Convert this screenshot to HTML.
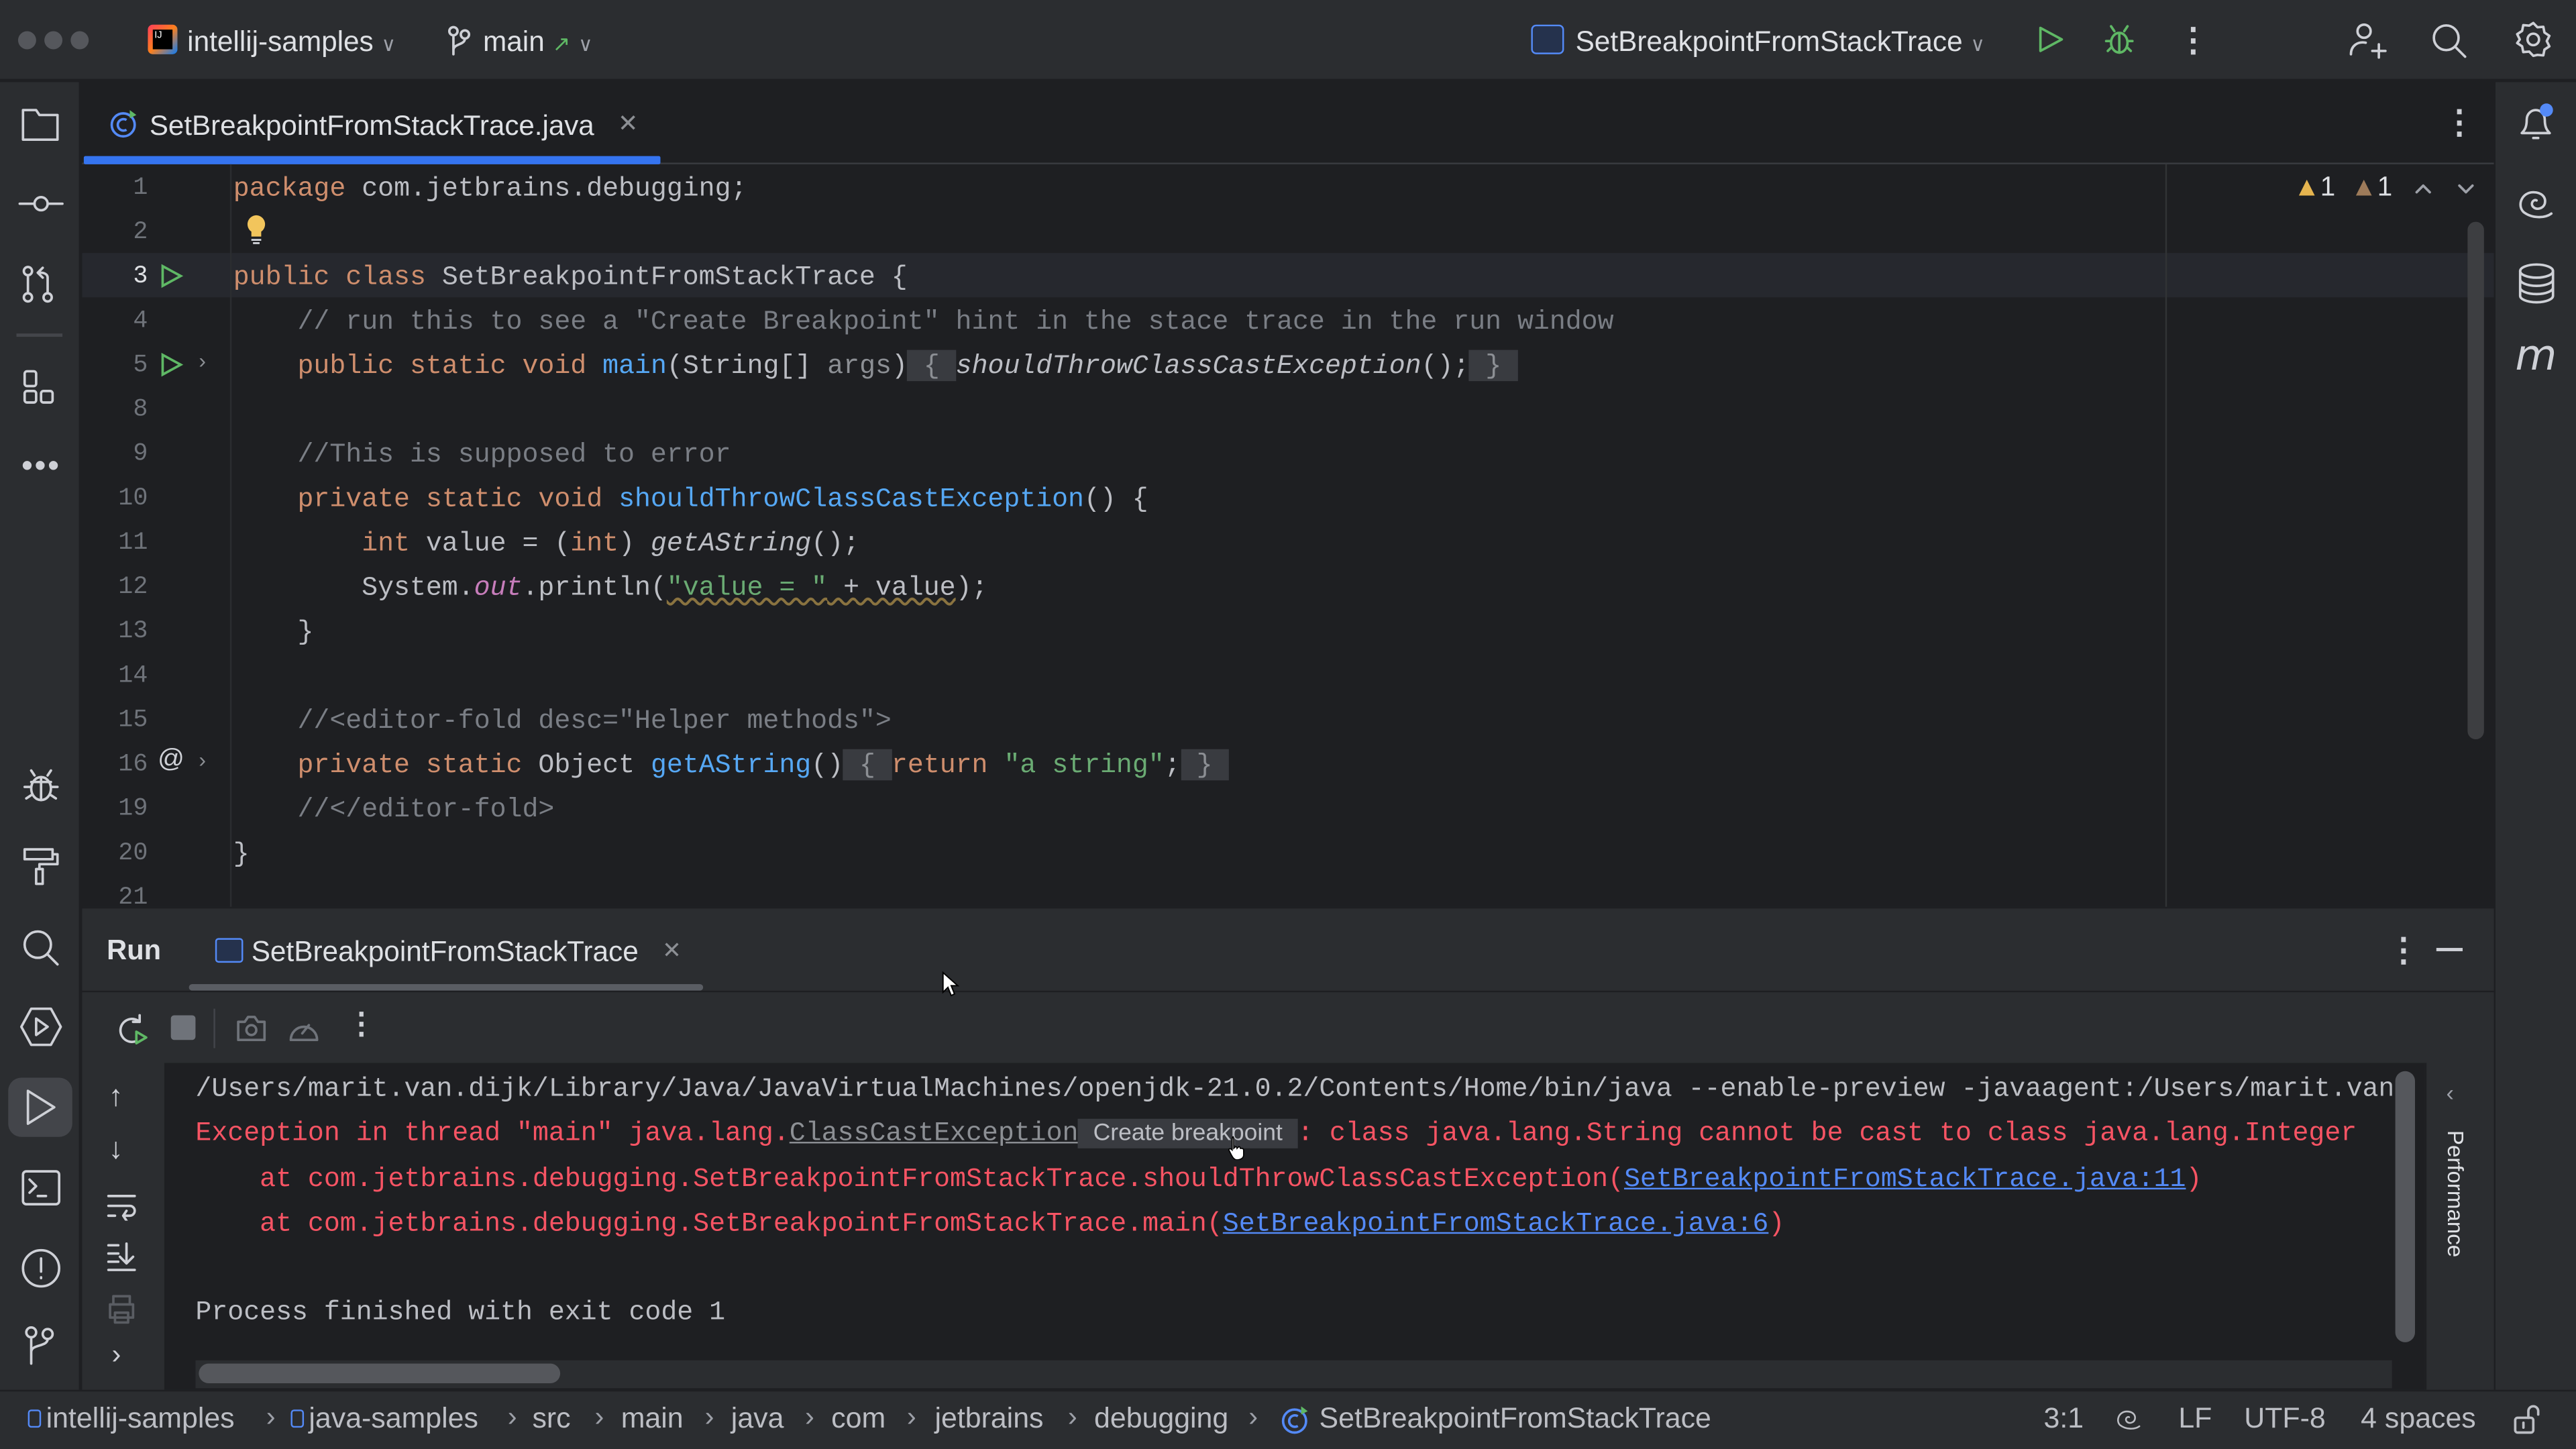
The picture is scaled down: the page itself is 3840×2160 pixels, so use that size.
<!DOCTYPE html>
<html><head><meta charset="utf-8">
<style>
*{margin:0;padding:0;box-sizing:border-box}
html,body{width:3840px;height:2160px;overflow:hidden;background:#1e1f22}
#s{position:absolute;left:0;top:0;width:1568px;height:882px;transform:scale(2.44898);transform-origin:0 0;background:#1e1f22;font-family:"Liberation Sans",sans-serif;color:#dfe1e5;overflow:hidden}
.a{position:absolute}
.mono{font-family:"Liberation Mono",monospace;font-size:16.3px;white-space:pre}
.ln{position:absolute;left:52px;width:38px;text-align:right;color:#6f737a;font-family:"Liberation Mono",monospace;font-size:15px}
.kw{color:#cf8e6d}.fn{color:#56a8f5}.cm{color:#7a7e85}.st{color:#6aab73}.it{font-style:italic}.gr{color:#8c8f94}
.fold{background:#393b40;color:#8c8f94}
.ic{position:absolute;stroke:#ced0d6;fill:none;stroke-width:1.5;stroke-linecap:round;stroke-linejoin:round}
.red{color:#f75464}
.lnk{color:#548af7;text-decoration:underline}
.sb{position:absolute;top:853px;font-size:17.5px;color:#bcbec4;white-space:pre}
.sep{position:absolute;top:853px;font-size:17px;color:#9da0a8}
.mod{display:inline-block;width:8px;height:11px;border:1.5px solid #548af7;border-radius:2px;margin-right:3px}
</style></head><body>
<div id="s">
<!-- title bar -->
<div class="a" style="left:0;top:0;width:1568px;height:49px;background:#2b2d30;border-bottom:1px solid #1e1f22"></div>
<div class="a" style="left:11px;top:19px;width:11px;height:11px;border-radius:50%;background:#55575c"></div>
<div class="a" style="left:27px;top:19px;width:11px;height:11px;border-radius:50%;background:#55575c"></div>
<div class="a" style="left:43px;top:19px;width:11px;height:11px;border-radius:50%;background:#55575c"></div>
<div class="a" style="left:90px;top:15px;width:18px;height:18px;border-radius:3px;background:linear-gradient(135deg,#ff3d5b,#fc801d 50%,#087cfa)"></div>
<div class="a" style="left:93px;top:18px;width:12px;height:12px;background:#000;color:#fff;font-size:6px;line-height:8px;padding-left:1px">IJ</div>
<div class="a" style="left:114px;top:15px;font-size:17.3px;color:#dfe1e5">intellij-samples <span style="color:#9da0a8;font-size:12px">∨</span></div>
<svg class="ic" style="left:272px;top:15px" width="16" height="20" viewBox="0 0 16 20"><circle cx="4" cy="4" r="2.5"/><circle cx="11" cy="6" r="2.5"/><path d="M4 6.5V18M11 8.5c0 4-7 3-7 7"/></svg>
<div class="a" style="left:294px;top:15px;font-size:17.3px">main <span style="color:#5fb865;font-size:13px">↗</span> <span style="color:#9da0a8;font-size:12px">∨</span></div>
<div class="a" style="left:932px;top:15px;width:20px;height:18px;border:1.5px solid #548af7;border-radius:3px;background:#25324d"></div>
<div class="a" style="left:959px;top:15px;font-size:17.3px">SetBreakpointFromStackTrace <span style="color:#9da0a8;font-size:12px">∨</span></div>
<svg class="ic" style="left:1238px;top:14px;stroke:#5fb865" width="20" height="20" viewBox="0 0 20 20"><path d="M4 3l13 7-13 7z"/></svg>
<svg class="ic" style="left:1279px;top:13px;stroke:#5fb865" width="22" height="22" viewBox="0 0 22 22"><ellipse cx="11" cy="13" rx="5" ry="6"/><path d="M8 6l-2-3M14 6l2-3M3 12h3M16 12h3M4 18l2-2M18 18l-2-2M11 8v11"/></svg>
<div class="a" style="left:1325px;top:12px;font-size:20px;color:#ced0d6;font-weight:bold">⋮</div>
<svg class="ic" style="left:1428px;top:12px" width="26" height="26" viewBox="0 0 26 26"><circle cx="11" cy="7" r="4"/><path d="M3 21c0-5 4-8 9-7M16 19h8M20 15v8"/></svg>
<svg class="ic" style="left:1479px;top:13px" width="24" height="24" viewBox="0 0 24 24"><circle cx="10" cy="10" r="7.5"/><path d="M15.5 15.5l6 6"/></svg>
<svg class="ic" style="left:1530px;top:12px" width="24" height="24" viewBox="0 0 24 24"><circle cx="12" cy="12" r="3.5"/><path d="M12 2l2.5 2.6 3.6-.3.7 3.5 3 2-1.6 3.2 1.6 3.2-3 2-.7 3.5-3.6-.3L12 22l-2.5-2.6-3.6.3-.7-3.5-3-2L3.8 12 2.2 8.8l3-2 .7-3.5 3.6.3z"/></svg>

<!-- left sidebar -->
<div class="a" style="left:0;top:50px;width:49px;height:796px;background:#2b2d30;border-right:1px solid #1e1f22"></div>
<svg class="ic" style="left:12px;top:64px" width="26" height="24" viewBox="0 0 26 24"><path d="M2 3h8l2 3h11v15H2z"/></svg>
<svg class="ic" style="left:10px;top:114px" width="30" height="20" viewBox="0 0 30 20"><circle cx="15" cy="10" r="4"/><path d="M2 10h9M19 10h9"/></svg>
<svg class="ic" style="left:12px;top:160px" width="26" height="26" viewBox="0 0 26 26"><circle cx="5" cy="5" r="2.5"/><circle cx="5" cy="21" r="2.5"/><circle cx="17" cy="21" r="2.5"/><path d="M5 8v10M17 18V9c0-2-2-3-4-3h-1M14 3l-3 3 3 3"/></svg>
<div class="a" style="left:10px;top:203px;width:28px;height:1.5px;background:#43454a"></div>
<svg class="ic" style="left:13px;top:224px" width="24" height="24" viewBox="0 0 24 24"><rect x="2" y="2" width="7" height="9" rx="1.5"/><rect x="2" y="14" width="7" height="7" rx="1.5"/><rect x="12" y="14" width="7" height="7" rx="1.5"/></svg>
<div class="a" style="left:13px;top:273px;font-size:20px;color:#ced0d6;letter-spacing:1px">•••</div>
<svg class="ic" style="left:12px;top:465px" width="26" height="26" viewBox="0 0 26 26"><ellipse cx="13" cy="15" rx="6" ry="7"/><path d="M9 7l-2-3M17 7l2-3M3 14h4M19 14h4M4 21l3-2M22 21l-3-2M13 9v13M7 11h12"/></svg>
<svg class="ic" style="left:12px;top:514px" width="26" height="26" viewBox="0 0 26 26"><path d="M3 3h17v6H3zM20 6h3v6H12v3M10 15h4v9h-4z"/></svg>
<svg class="ic" style="left:12px;top:564px" width="26" height="26" viewBox="0 0 26 26"><circle cx="11" cy="11" r="8"/><path d="M17 17l6 6"/></svg>
<svg class="ic" style="left:11px;top:612px" width="28" height="26" viewBox="0 0 28 26"><path d="M8 2h12l6 11-6 11H8L2 13z"/><path d="M11 8l7 5-7 5z"/></svg>
<div class="a" style="left:5px;top:656px;width:39px;height:36px;border-radius:8px;background:#43454a"></div>
<svg class="ic" style="left:14px;top:662px" width="22" height="24" viewBox="0 0 22 24"><path d="M3 2l16 10L3 22z"/></svg>
<svg class="ic" style="left:12px;top:711px" width="26" height="24" viewBox="0 0 26 24"><rect x="2" y="2" width="22" height="20" rx="2"/><path d="M6 7l4 4-4 4M11 17h5"/></svg>
<svg class="ic" style="left:11px;top:758px" width="28" height="28" viewBox="0 0 28 28"><circle cx="14" cy="14" r="11"/><path d="M14 8v8M14 19.5v.5"/></svg>
<svg class="ic" style="left:13px;top:806px" width="24" height="26" viewBox="0 0 24 26"><circle cx="6" cy="5" r="3"/><circle cx="16" cy="6" r="3"/><path d="M6 8v16M16 9c0 5-10 3-10 8"/></svg>

<!-- right sidebar -->
<div class="a" style="left:1518px;top:50px;width:50px;height:796px;background:#2b2d30;border-left:1px solid #1e1f22"></div>
<svg class="ic" style="left:1531px;top:61px" width="26" height="28" viewBox="0 0 26 28"><path d="M4 20h17c-2-2-3-4-3-8 0-4-3-6-5.5-6S7 8 7 12c0 4-1 6-3 8zM11 23h3"/></svg>
<div class="a" style="left:1546px;top:63px;width:8px;height:8px;border-radius:50%;background:#548af7"></div>
<svg class="ic" style="left:1531px;top:111px" width="26" height="26" viewBox="0 0 26 26"><path d="M22 19c-4 3-12 3-17-1-4-4-1-12 6-12 5 0 8 3 7 7-1 3-5 4-7 2-2-2 0-5 2-4"/></svg>
<svg class="ic" style="left:1531px;top:159px" width="26" height="28" viewBox="0 0 26 28"><ellipse cx="13" cy="6" rx="10" ry="4"/><path d="M3 6v15c0 2 4 4 10 4s10-2 10-4V6M3 11c0 2 4 4 10 4s10-2 10-4M3 16c0 2 4 4 10 4s10-2 10-4"/></svg>
<div class="a" style="left:1531px;top:202px;font-size:26px;font-style:italic;color:#ced0d6;font-family:'DejaVu Sans',sans-serif">m</div>

<!-- editor tab row -->
<div class="a" style="left:50px;top:99px;width:1468px;height:1px;background:#393b40"></div>
<svg class="a" style="left:66px;top:66px" width="18" height="18" viewBox="0 0 18 18"><circle cx="9" cy="10" r="7" fill="none" stroke="#548af7" stroke-width="1.5"/><path d="M11 7a3.5 3.5 0 1 0 0 6" fill="none" stroke="#548af7" stroke-width="1.5"/><path d="M13 1l4 3-4 2z" fill="#5fb865"/></svg>
<div class="a" style="left:91px;top:66px;font-size:17.2px;color:#dfe1e5">SetBreakpointFromStackTrace.java</div>
<div class="a" style="left:376px;top:66px;font-size:15px;color:#8c8f94">✕</div>
<div class="a" style="left:51px;top:95px;width:351px;height:5px;background:#3574f0;border-radius:1px"></div>
<div class="a" style="left:1487px;top:62px;font-size:20px;color:#ced0d6;font-weight:bold">⋮</div>

<!-- editor -->
<div class="a" style="left:50px;top:154px;width:1468px;height:27px;background:#26282e"></div>
<div class="a" style="left:140px;top:100px;width:1px;height:452px;background:#2b2d30"></div>
<div class="a" style="left:1318px;top:100px;width:1px;height:452px;background:#313335"></div>
<div class="a" style="left:1502px;top:135px;width:10px;height:315px;border-radius:5px;background:#3d3e41"></div>
<div class="a" style="left:1396px;top:105px;font-size:16.5px;color:#dfe1e5;white-space:pre"><span style="color:#e5b44f">▲</span>1  <span style="color:#9e7b5a">▲</span>1</div>
<svg class="ic" style="left:1469px;top:110px;stroke:#9da0a8" width="12" height="10" viewBox="0 0 12 10"><path d="M2 7l4-4 4 4"/></svg>
<svg class="ic" style="left:1495px;top:110px;stroke:#9da0a8" width="12" height="10" viewBox="0 0 12 10"><path d="M2 3l4 4 4-4"/></svg>

<div class="ln" style="top:106px">1</div>
<div class="ln" style="top:133px">2</div>
<div class="ln" style="top:160px;color:#dfe1e5">3</div>
<div class="ln" style="top:187px">4</div>
<div class="ln" style="top:214px">5</div>
<div class="ln" style="top:241px">8</div>
<div class="ln" style="top:268px">9</div>
<div class="ln" style="top:295px">10</div>
<div class="ln" style="top:322px">11</div>
<div class="ln" style="top:349px">12</div>
<div class="ln" style="top:376px">13</div>
<div class="ln" style="top:403px">14</div>
<div class="ln" style="top:430px">15</div>
<div class="ln" style="top:457px">16</div>
<div class="ln" style="top:484px">19</div>
<div class="ln" style="top:511px">20</div>
<div class="ln" style="top:538px">21</div>
<svg class="a" style="left:96px;top:160px" width="16" height="16" viewBox="0 0 16 16"><path d="M3 2l11 6-11 6z" fill="none" stroke="#5fb865" stroke-width="1.5"/></svg>
<svg class="a" style="left:96px;top:214px" width="16" height="16" viewBox="0 0 16 16"><path d="M3 2l11 6-11 6z" fill="none" stroke="#5fb865" stroke-width="1.5"/></svg>
<div class="a" style="left:121px;top:212px;color:#8c8f94;font-size:13px">›</div>
<div class="a" style="left:96px;top:454px;color:#ced0d6;font-size:16px">@</div>
<div class="a" style="left:121px;top:455px;color:#8c8f94;font-size:13px">›</div>
<svg class="a" style="left:149px;top:130px" width="14" height="20" viewBox="0 0 14 20"><path d="M7 1a5.5 5.5 0 0 0-3 10v3h6v-3a5.5 5.5 0 0 0-3-10z" fill="#f2c55c"/><path d="M4 16h6M5 18h4" stroke="#ced0d6" stroke-width="1.2"/></svg>

<div class="a mono" style="left:142px;top:101px;line-height:27px;color:#bcbec4"><span class="kw">package</span> com.jetbrains.debugging;

<span class="kw">public class</span> SetBreakpointFromStackTrace {
    <span class="cm">// run this to see a "Create Breakpoint" hint in the stace trace in the run window</span>
    <span class="kw">public static void</span> <span class="fn">main</span>(String[] <span class="gr">args</span>)<span class="fold"> { </span><span class="it">shouldThrowClassCastException</span>();<span class="fold"> } </span>

    <span class="cm">//This is supposed to error</span>
    <span class="kw">private static void</span> <span class="fn">shouldThrowClassCastException</span>() {
        <span class="kw">int</span> value = (<span class="kw">int</span>) <span class="it">getAString</span>();
        System.<span class="it" style="color:#c77dbb">out</span>.println(<span class="st" style="text-decoration:underline wavy #8a7340">"value = "</span><span style="text-decoration:underline wavy #8a7340"> + value</span>);
    }

    <span class="cm">//&lt;editor-fold desc="Helper methods"&gt;</span>
    <span class="kw">private static</span> Object <span class="fn">getAString</span>()<span class="fold"> { </span><span class="kw">return</span> <span class="st">"a string"</span>;<span class="fold"> } </span>
    <span class="cm">//&lt;/editor-fold&gt;</span>
}
</div>

<!-- run panel -->
<div class="a" style="left:50px;top:552px;width:1468px;height:95px;background:#2b2d30;border-top:1px solid #1e1f22"></div>
<div class="a" style="left:65px;top:569px;font-size:17px;font-weight:bold;color:#dfe1e5">Run</div>
<div class="a" style="left:131px;top:571px;width:17px;height:15px;border:1.5px solid #548af7;border-radius:2px;background:#25324d"></div>
<div class="a" style="left:153px;top:569px;font-size:17.3px;color:#dfe1e5">SetBreakpointFromStackTrace</div>
<div class="a" style="left:403px;top:570px;font-size:14px;color:#8c8f94">✕</div>
<div class="a" style="left:115px;top:599px;width:313px;height:4px;border-radius:2px;background:#5a5d63"></div>
<div class="a" style="left:50px;top:603px;width:1468px;height:1px;background:#1e1f22"></div>
<div class="a" style="left:1453px;top:566px;font-size:20px;color:#ced0d6;font-weight:bold">⋮</div>
<div class="a" style="left:1483px;top:577px;width:16px;height:1.5px;background:#ced0d6"></div>
<svg class="a" style="left:572px;top:591px" width="12" height="16" viewBox="0 0 12 16"><path d="M2 1v12l3-3 2 5 2-1-2-5h4z" fill="#fff" stroke="#000" stroke-width=".8"/></svg>
<svg class="ic" style="left:69px;top:616px;stroke:#ced0d6" width="22" height="22" viewBox="0 0 22 22"><path d="M16 6a7 7 0 1 0-3 12"/><path d="M16 2v4h-4"/><path d="M14 12l6 3.5-6 3.5z" stroke="#5fb865"/></svg>
<div class="a" style="left:104px;top:618px;width:15px;height:15px;border-radius:2px;background:#6f737a"></div>
<div class="a" style="left:130px;top:614px;width:1px;height:24px;background:#43454a"></div>
<svg class="ic" style="left:143px;top:616px;stroke:#6f737a" width="20" height="20" viewBox="0 0 20 20"><path d="M2 6h4l2-3h4l2 3h4v11H2z"/><circle cx="10" cy="11" r="3"/></svg>
<svg class="ic" style="left:174px;top:616px;stroke:#6f737a" width="22" height="20" viewBox="0 0 22 20"><path d="M3 17a8 8 0 1 1 16 0zM10 13l4-5"/></svg>
<div class="a" style="left:211px;top:613px;font-size:18px;color:#ced0d6;font-weight:bold">⋮</div>

<div class="a" style="left:50px;top:647px;width:50px;height:199px;background:#2b2d30"></div>
<div class="a" style="left:66px;top:657px;font-size:18px;color:#ced0d6">↑</div>
<div class="a" style="left:66px;top:689px;font-size:18px;color:#ced0d6">↓</div>
<svg class="ic" style="left:64px;top:725px" width="20" height="18" viewBox="0 0 20 18"><path d="M2 3h16M2 9h13a3 3 0 0 1 0 6h-4M13 12l-2 3 2 3M2 15h4"/></svg>
<svg class="ic" style="left:64px;top:755px" width="20" height="20" viewBox="0 0 20 20"><path d="M2 3h6M2 8h6M2 13h6M13 2v12M9 10l4 4 4-4M2 18h16"/></svg>
<svg class="ic" style="left:64px;top:787px;stroke:#5a5d63" width="20" height="20" viewBox="0 0 20 20"><path d="M5 7V2h10v5M3 7h14v8H3zM6 12h8v6H6z"/></svg>
<div class="a" style="left:68px;top:815px;font-size:17px;color:#ced0d6">›</div>

<div class="a mono" style="left:119px;top:649px;line-height:27px;color:#bcbec4;width:1337px;overflow:hidden">/Users/marit.van.dijk/Library/Java/JavaVirtualMachines/openjdk-21.0.2/Contents/Home/bin/java --enable-preview -javaagent:/Users/marit.van.dijk
<span class="red">Exception in thread "main" java.lang.<span style="color:#8c8f94;text-decoration:underline">ClassCastException</span><span style="font-family:'Liberation Sans',sans-serif;font-size:14.5px;color:#bcbec4;background:#393b40;padding:1px 5px"> Create breakpoint </span>: class java.lang.String cannot be cast to class java.lang.Integer</span>
<span class="red">    at com.jetbrains.debugging.SetBreakpointFromStackTrace.shouldThrowClassCastException(<span class="lnk">SetBreakpointFromStackTrace.java:11</span>)</span>
<span class="red">    at com.jetbrains.debugging.SetBreakpointFromStackTrace.main(<span class="lnk">SetBreakpointFromStackTrace.java:6</span>)</span>

Process finished with exit code 1</div>
<svg class="a" style="left:746px;top:690px" width="12" height="16" viewBox="0 0 12 16"><path d="M4 2c1 0 1 1 1 2v5l1-1c1 0 1 1 1 1l1-1c1 0 1 1 1 1l1 0c1 0 1 1 1 2v2c0 2-2 3-4 3H7c-2 0-3-2-4-4l-1-2c0-1 1-1 2 0V4c0-1 0-2 1-2z" fill="#fff" stroke="#000" stroke-width=".7"/></svg>
<div class="a" style="left:1458px;top:652px;width:12px;height:165px;border-radius:6px;background:#55575c"></div>
<div class="a" style="left:119px;top:828px;width:1337px;height:17px;background:#2b2d30"></div>
<div class="a" style="left:121px;top:830px;width:220px;height:12px;border-radius:6px;background:#55575c"></div>
<div class="a" style="left:1476px;top:647px;width:42px;height:199px;background:#2b2d30;border-left:1px solid #1e1f22"></div>
<div class="a" style="left:1489px;top:657px;font-size:14px;color:#9da0a8">‹</div>
<div class="a" style="left:1487px;top:688px;font-size:13.5px;color:#dfe1e5;writing-mode:vertical-rl">Performance</div>

<!-- status bar -->
<div class="a" style="left:0;top:846px;width:1568px;height:36px;background:#2b2d30;border-top:1px solid #1e1f22"></div>
<div class="sb" style="left:17px"><span class="mod"></span>intellij-samples</div>
<div class="sep" style="left:162px">›</div>
<div class="sb" style="left:177px"><span class="mod"></span>java-samples</div>
<div class="sep" style="left:309px">›</div>
<div class="sb" style="left:324px">src</div>
<div class="sep" style="left:362px">›</div>
<div class="sb" style="left:378px">main</div>
<div class="sep" style="left:429px">›</div>
<div class="sb" style="left:445px">java</div>
<div class="sep" style="left:490px">›</div>
<div class="sb" style="left:506px">com</div>
<div class="sep" style="left:552px">›</div>
<div class="sb" style="left:569px">jetbrains</div>
<div class="sep" style="left:650px">›</div>
<div class="sb" style="left:666px">debugging</div>
<div class="sep" style="left:760px">›</div>
<svg class="a" style="left:779px;top:855px" width="18" height="18" viewBox="0 0 18 18"><circle cx="9" cy="10" r="7" fill="none" stroke="#548af7" stroke-width="1.5"/><path d="M11 7a3.5 3.5 0 1 0 0 6" fill="none" stroke="#548af7" stroke-width="1.5"/><path d="M13 1l4 3-4 2z" fill="#5fb865"/></svg>
<div class="sb" style="left:803px">SetBreakpointFromStackTrace</div>
<div class="sb" style="left:1244px">3:1</div>
<svg class="ic" style="left:1287px;top:855px;stroke:#bcbec4" width="18" height="18" viewBox="0 0 26 26"><path d="M22 19c-4 3-12 3-17-1-4-4-1-12 6-12 5 0 8 3 7 7-1 3-5 4-7 2-2-2 0-5 2-4"/></svg>
<div class="sb" style="left:1326px">LF</div>
<div class="sb" style="left:1366px">UTF-8</div>
<div class="sb" style="left:1437px">4 spaces</div>
<svg class="ic" style="left:1529px;top:854px;stroke:#bcbec4" width="20" height="20" viewBox="0 0 20 20"><rect x="2" y="9" width="11" height="9" rx="1.5"/><path d="M7 12v3M10 9V5a3 3 0 0 1 6 0v2"/></svg>
</div>
</body></html>
